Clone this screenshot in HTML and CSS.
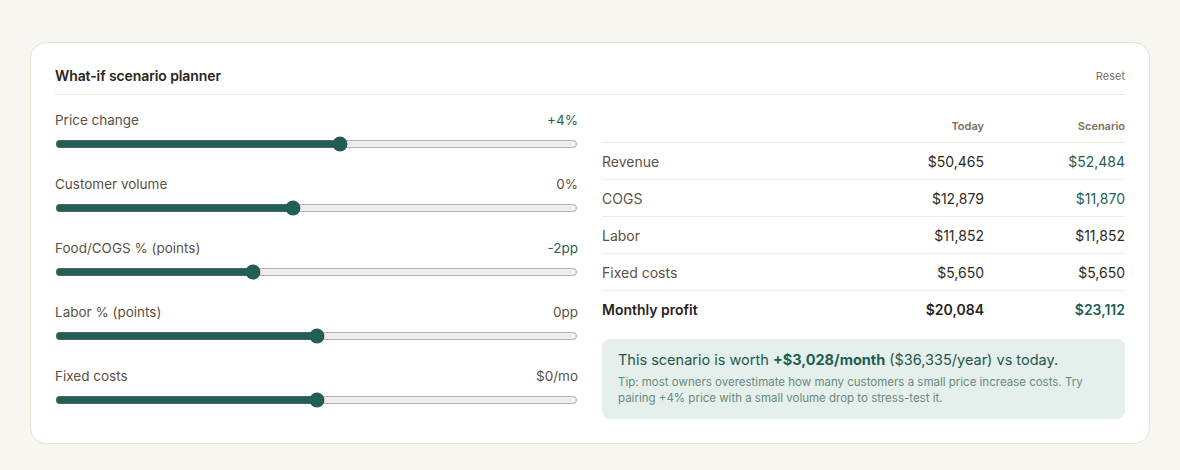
FILE: index.html
```html
<!DOCTYPE html>
<html lang="en">

<head>
    <meta charset="UTF-8">
    <meta name="viewport" content="width=device-width, initial-scale=1.0">
    <link rel="stylesheet" href="styles.css">
    <title>What-if scenario planner</title>
</head>

<body>
    <div class="planner">
        <div class="planner-head">
            <h2>What-if scenario planner</h2>
            <button class="reset">Reset</button>
        </div>

        <div class="planner-body">
            <div class="controls">
                <div class="control">
                    <div class="control-row">
                        <label for="price">Price change</label>
                        <span class="value up">+4%</span>
                    </div>
                    <input type="range" id="price" min="-20" max="24" value="4">
                </div>
                <div class="control">
                    <div class="control-row">
                        <label for="volume">Customer volume</label>
                        <span class="value">0%</span>
                    </div>
                    <input type="range" id="volume" min="-25" max="30" value="0">
                </div>
                <div class="control">
                    <div class="control-row">
                        <label for="cogs">Food/COGS % (points)</label>
                        <span class="value up">-2pp</span>
                    </div>
                    <input type="range" id="cogs" min="-8" max="8" value="-2">
                </div>
                <div class="control">
                    <div class="control-row">
                        <label for="labor">Labor % (points)</label>
                        <span class="value">0pp</span>
                    </div>
                    <input type="range" id="labor" min="-10" max="10" value="0">
                </div>
                <div class="control">
                    <div class="control-row">
                        <label for="fixed">Fixed costs</label>
                        <span class="value">$0/mo</span>
                    </div>
                    <input type="range" id="fixed" min="-2000" max="2000" value="0">
                </div>
            </div>

            <div class="results">
                <table class="compare">
                    <thead>
                        <tr>
                            <th></th>
                            <th>Today</th>
                            <th>Scenario</th>
                        </tr>
                    </thead>
                    <tbody>
                        <tr>
                            <td>Revenue</td>
                            <td>$50,465</td>
                            <td class="up">$52,484</td>
                        </tr>
                        <tr>
                            <td>COGS</td>
                            <td>$12,879</td>
                            <td class="up">$11,870</td>
                        </tr>
                        <tr>
                            <td>Labor</td>
                            <td>$11,852</td>
                            <td>$11,852</td>
                        </tr>
                        <tr>
                            <td>Fixed costs</td>
                            <td>$5,650</td>
                            <td>$5,650</td>
                        </tr>
                        <tr class="total">
                            <td>Monthly profit</td>
                            <td>$20,084</td>
                            <td class="up">$23,112</td>
                        </tr>
                    </tbody>
                </table>

                <div class="summary">
                    <p class="summary-main">This scenario is worth <strong>+$3,028/month</strong> ($36,335/year) vs today.</p>
                    <p class="summary-tip">Tip: most owners overestimate how many customers a small price increase costs. Try pairing +4% price with a small volume drop to stress-test it.</p>
                </div>
            </div>
        </div>
    </div>
</body>

</html>
```

FILE: styles.css
```css
body {
    margin: 0;
    padding: 42px 30px;
    font-family: Inter, "Noto Sans", sans-serif;
    background-color: #f7f6f0;
    color: #2a2420;
}

.planner {
    background-color: #fff;
    border: 1px solid #e6e2d5;
    border-radius: 16px;
    padding: 23px 24px 24px;
}

.planner-head {
    display: flex;
    justify-content: space-between;
    align-items: center;
    padding-bottom: 8px;
    border-bottom: 1px solid #ece9df;
}

.planner-head h2 {
    margin: 0;
    font-size: 14px;
    font-weight: 600;
    line-height: 20px;
    letter-spacing: -0.1px;
}

.reset {
    padding: 0;
    border: none;
    background: none;
    font-family: inherit;
    font-size: 11px;
    color: #7c7064;
    cursor: pointer;
}

.planner-body {
    display: grid;
    grid-template-columns: 1fr 1fr;
    gap: 24px;
    margin-top: 15px;
}

.controls {
    display: flex;
    flex-direction: column;
    gap: 22px;
}

.control-row {
    display: flex;
    justify-content: space-between;
    font-size: 13.5px;
    line-height: 20px;
    color: #5c5047;
}

.value.up {
    color: #1f5f53;
}

.control input {
    display: block;
    width: 100%;
    height: 16px;
    margin: 6px 0 0;
    accent-color: #215f54;
}

.compare {
    width: 100%;
    border-collapse: collapse;
    font-size: 14px;
}

.compare th {
    font-size: 11px;
    font-weight: 600;
    color: #7c7064;
    text-align: right;
    height: 32px;
    padding: 0;
    border-bottom: 1px solid #e9e5da;
}

.compare th:nth-child(2),
.compare td:nth-child(2) {
    width: 140px;
}

.compare th:nth-child(3),
.compare td:nth-child(3) {
    width: 141px;
}

.compare td {
    height: 36px;
    padding: 0;
    text-align: right;
    color: #2f2924;
    border-bottom: 1px solid #efece4;
}

.compare td:first-child {
    text-align: left;
    color: #5c5047;
}

.compare td.up {
    color: #1f5f53;
}

.compare .total td {
    border-bottom: none;
    font-weight: 600;
    color: #2a2420;
}

.compare .total td.up {
    color: #1f5f53;
}

.summary {
    margin-top: 12px;
    padding: 11px 16px 13px;
    background-color: #e5efeb;
    border-radius: 8px;
    color: #24584c;
}

.summary p {
    margin: 0;
}

.summary-main {
    font-size: 14.5px;
    line-height: 20px;
}

.summary-main strong {
    font-weight: 700;
    color: #1f5f53;
}

.summary-tip {
    margin-top: 4px !important;
    font-size: 11.5px;
    line-height: 16px;
    color: #6b8a80;
}
```
